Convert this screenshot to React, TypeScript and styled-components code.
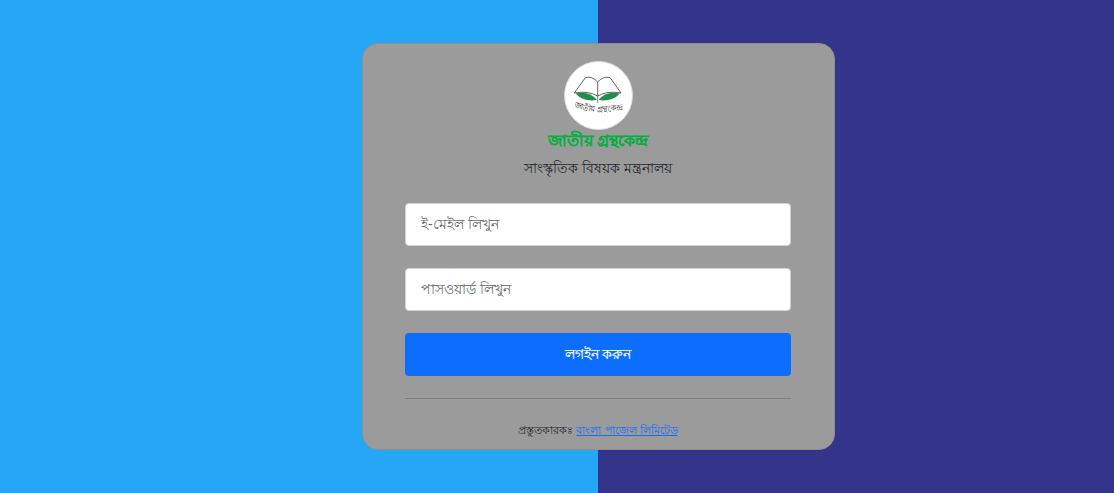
import React from "react";
import styled, { createGlobalStyle } from "styled-components";

const Global = createGlobalStyle`
  html, body { margin: 0; padding: 0; height: 100%; }
  body { font-family: "Liberation Sans", "Noto Sans", sans-serif; }
  input::placeholder { color: #5f676e; opacity: 1; }
`;

const Page = styled.main`
  box-sizing: border-box;
  height: 493px;
  overflow: hidden;
  padding: 43px 0 0 362px;
  background: linear-gradient(to right, #26a7f5 598px, #34358a 598px);
`;

const Card = styled.section`
  box-sizing: border-box;
  width: 473px;
  height: 407px;
  padding: 17px 43px 0 42px;
  background: #9b9b9b;
  border: 1px solid #8f8f8f;
  border-radius: 16px;
  display: flex;
  flex-direction: column;
  align-items: stretch;
`;

const Logo = styled.div`
  box-sizing: border-box;
  align-self: center;
  width: 69px;
  height: 69px;
  border-radius: 50%;
  background: #fff;
  border: 1px solid #ddd;
  display: flex;
  align-items: center;
  justify-content: center;
`;

const Brand = styled.h1`
  margin: 1px 0 0;
  text-align: center;
  font-size: 16px;
  line-height: 20px;
  font-weight: 700;
  color: #12a84a;
  -webkit-text-stroke: 0.3px #12a84a;
  text-shadow: 0 0 1px rgba(200, 255, 215, 0.55);
`;

const Ministry = styled.p`
  margin: 7px 0 0;
  text-align: center;
  font-size: 14.4px;
  line-height: 21px;
  color: #212529;
`;

const Form = styled.form`
  margin-top: 24px;
  display: flex;
  flex-direction: column;
  gap: 22px;
`;

const Field = styled.input`
  box-sizing: border-box;
  width: 100%;
  height: 43px;
  padding: 0 15px 2px;
  font: 14px "Liberation Sans", "Noto Sans", sans-serif;
  background: #fff;
  border: 1px solid #ced4da;
  border-radius: 4px;
`;

const Submit = styled.button`
  height: 43px;
  border: 0;
  border-radius: 4px;
  background: #0d6efd;
  color: #fff;
  font: 14px "Liberation Sans", "Noto Sans", sans-serif;
  -webkit-text-stroke: 0.2px #fff;
`;

const Rule = styled.hr`
  margin: 22px 0 0;
  border: 0;
  border-top: 1px solid #7f7f7f;
`;

const Credit = styled.p`
  margin: 23px 0 0;
  text-align: center;
  font-size: 11.35px;
  line-height: 16px;
  color: #212529;
`;

const CreditLink = styled.a`
  color: #0d6efd;
`;

const BookMark = () => (
  <svg width="67" height="67" viewBox="0 0 67 67" fill="none" aria-hidden="true">
    <path d="M9.3 31 L20.5 15.5 Q27.5 14 32.7 20 Q38 14 45 15.5 L56 31 Q42 28.5 32.7 34 Q23 28.5 9.3 31 Z" fill="#fff" stroke="#222" strokeWidth="0.7" />
    <path d="M32.7 20 V34" stroke="#222" strokeWidth="0.7" />
    <path d="M10.5 31.5 Q24 28.5 32 38 Q18 40 10.5 31.5 Z" fill="#1f8f4c" />
    <path d="M55 31.5 Q41 28.5 33.5 38 Q47 40 55 31.5 Z" fill="#1f8f4c" />
    <path d="M32.7 34 V41" stroke="#333" strokeWidth="0.6" />
    <path id="logo-arc" d="M8 45 Q33 54 59 47" />
    <text fontSize="8" fill="#222" fontFamily="'Liberation Sans', 'Noto Sans', sans-serif">
      <textPath href="#logo-arc" startOffset="50%" textAnchor="middle">জাতীয় গ্রন্থকেন্দ্র</textPath>
    </text>
  </svg>
);

export default function App() {
  return (
    <>
      <Global />
      <Page>
        <Card>
          <Logo><BookMark /></Logo>
          <Brand>জাতীয় গ্রন্থকেন্দ্র</Brand>
          <Ministry>সাংস্কৃতিক বিষয়ক মন্ত্রনালয়</Ministry>
          <Form onSubmit={(e) => e.preventDefault()}>
            <Field type="email" placeholder="ই-মেইল লিখুন" />
            <Field type="password" placeholder="পাসওয়ার্ড লিখুন" />
            <Submit type="submit">লগইন করুন</Submit>
          </Form>
          <Rule />
          <Credit>
            প্রস্তুতকারকঃ <CreditLink href="#">বাংলা পাজেল লিমিটেড</CreditLink>
          </Credit>
        </Card>
      </Page>
    </>
  );
}
